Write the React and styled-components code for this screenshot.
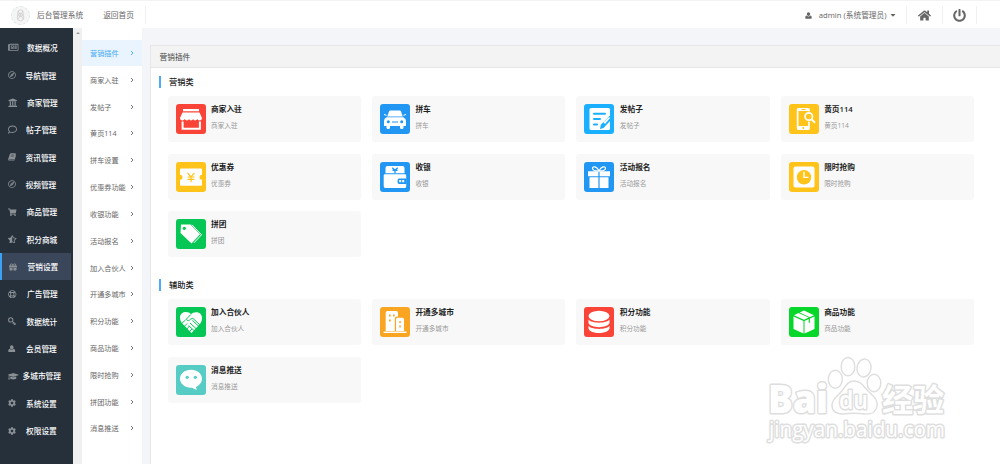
import React, { useState } from 'react';
import styled, { createGlobalStyle } from 'styled-components';
import {
  FaRegNewspaper,
  FaRegCompass,
  FaUniversity,
  FaRegComment,
  FaShoppingCart,
  FaStarHalfAlt,
  FaGift,
  FaRegLifeRing,
  FaGraduationCap,
  FaCog,
  FaHome,
  FaPowerOff,
  FaCaretDown,
} from 'react-icons/fa';

const GlobalStyle = createGlobalStyle`
  * {
    box-sizing: border-box;
  }
  body {
    margin: 0;
    overflow: hidden;
    background: #f4f5f8;
    font-family: 'Open Sans', 'Noto Sans CJK SC', sans-serif;
  }
`;

const Page = styled.div`
  display: flex;
  flex-direction: column;
  height: 464px;
  position: relative;
`;

const Header = styled.header`
  display: flex;
  justify-content: space-between;
  height: 28px;
  flex-shrink: 0;
  padding-top: 2px;
  background: #fff;
  border-top: 1px solid #f3f3f3;
  color: #666;
  font-size: 7.7px;
`;

const HeaderSide = styled.div`
  display: flex;
  align-items: center;
  height: 24px;
`;

const Logo = styled.div`
  width: 19px;
  height: 19px;
  margin: 1px 7.5px 0 10.5px;
  border-radius: 50%;
  border: 1px dashed #dbe9e5;
  background: #f5f5f5;
  display: flex;
  align-items: center;
  justify-content: center;
`;

const HeaderLink = styled.a`
  line-height: 24px;
  margin-right: ${(props) => props.$gap};
`;

const Divider = styled.i`
  width: 1px;
  height: 18px;
  background: #f0f0f0;
`;

const Admin = styled.div`
  display: flex;
  align-items: center;
  padding-right: 9.5px;
  line-height: 22px;
  height: 24px;

  svg:first-child {
    margin-right: 7px;
  }
  svg:last-child {
    margin-left: 2px;
  }
`;

const HeaderButton = styled.div`
  width: ${(props) => props.$width};
  display: flex;
  justify-content: center;
  font-size: 13px;
`;

const Body = styled.div`
  display: flex;
  flex: 1;
  min-height: 0;
`;

const Sidebar = styled.nav`
  width: 73px;
  padding-top: 6px;
  background: #25303b;
  border-right: 2px solid #25303b;
`;

const SideItem = styled.div`
  display: flex;
  align-items: center;
  height: 27.36px;
  padding-left: ${(props) => (props.$active ? '7px' : '8px')};
  border-left: ${(props) => (props.$active ? '2px solid #3ca0f5' : 'none')};
  background: ${(props) => (props.$active ? '#3a465a' : 'transparent')};
  color: #fff;
  font-size: 7.7px;
  font-weight: 500;
  white-space: nowrap;
  cursor: pointer;

  svg {
    flex-shrink: 0;
    color: #8b9094;
  }
  span {
    margin-left: ${(props) => props.$gap}px;
  }
`;

const ScrollTrack = styled.div`
  width: 9px;
  padding-top: 4px;
  background: #f0f0f0;
  display: flex;
  justify-content: center;
`;

const ScrollArrow = styled.i`
  width: 0;
  height: 0;
  border: 2px solid transparent;
  border-top: 0;
  border-bottom-color: #999;
`;

const SubMenu = styled.nav`
  width: 60px;
  padding-top: 11.6px;
  background: #fff;
`;

const SubItem = styled.div`
  display: flex;
  align-items: center;
  justify-content: space-between;
  height: 26.82px;
  padding: 0 8px;
  background: ${(props) => (props.$active ? '#eaf4fe' : 'transparent')};
  color: ${(props) => (props.$active ? '#3daaf8' : '#666')};
  font-size: 7.15px;
  white-space: nowrap;
`;

const Main = styled.main`
  flex: 1;
  padding: 17px 0 0 8px;
`;

const Panel = styled.section`
  height: 100%;
  background: #fff;
  border-left: 1px solid #e7e7e7;
`;

const PanelHead = styled.div`
  height: 23px;
  padding-left: 8.5px;
  line-height: 22px;
  background: #f3f3f3;
  border-top: 1px solid #e6e6e6;
  border-bottom: 1px solid #e6e6e6;
  color: #444;
  font-size: 7.7px;
`;

const Group = styled.div`
  padding: 8px 0 0 8px;
  height: 203px;
`;

const GroupTitle = styled.div`
  height: 12px;
  padding-left: 8px;
  border-left: 2px solid #4dabf7;
  line-height: 11px;
  color: #222;
  font-size: 8.2px;
  font-weight: 500;
`;

const Cards = styled.div`
  display: grid;
  grid-template-columns: repeat(4, 193.4px);
  grid-auto-rows: 46px;
  gap: 11.6px 11px;
  padding: 8px 0 0 8.5px;
`;

const Card = styled.div`
  display: flex;
  padding: 8px;
  border-radius: 3px;
  background: #f8f8f8;
`;

const CardIcon = styled.svg`
  width: 30px;
  height: 30px;
  margin-right: 5.5px;
  border-radius: 3px;
  background: ${(props) => props.$bg};
`;

const CardName = styled.div`
  height: 11px;
  line-height: 11px;
  color: #222;
  font-size: 7.7px;
  font-weight: 600;
`;

const CardDesc = styled.div`
  margin-top: 5px;
  line-height: 11px;
  color: #999;
  font-size: 6.65px;
`;

const Watermark = styled.svg`
  position: absolute;
  left: 750px;
  top: 350px;
  overflow: visible;
`;

const UserIcon = ({ size }) => (
  <svg width={size} height={size} viewBox="0 0 14 14" fill="currentColor">
    <path d="M7 .5c2 0 3.300 1.500 3.300 3.600S9 8 7 8 3.700 6.200 3.700 4.100 5 .5 7 .5zM3.600 6.800C4.500 8.200 5.600 9 7 9s2.500-.8 3.400-2.200c2.300.3 3.100 2.400 3.100 4.700 0 1.200-.8 2-2 2h-9c-1.200 0-2-.8-2-2 0-2.300.8-4.400 3.100-4.700z" />
  </svg>
);

const BookIcon = ({ size }) => (
  <svg width={size} height={size} viewBox="0 0 14 14" fill="currentColor">
    <path d="M5.200.5h7.300c1 0 1.400.7 1.200 1.500l-2.500 8.300c-.2.8-.8 1.200-1.500 1.200H2.200c-.7 0-.7 1 .3 1h8l2.800-8.500c.6.4.7.8.5 1.400l-2.300 7c-.2.700-.8 1.200-1.500 1.200H2.300C.8 13.600-.1 12 .4 10.700L3.200 2C3.500 1 4.200.5 5.200.5z" />
    <path d="M5.700 3.500h5M5 5.700h5" stroke="#25303b" strokeWidth=".9" />
  </svg>
);

const KeyIcon = ({ size }) => (
  <svg width={size} height={size} viewBox="0 0 14 14" fill="none" stroke="currentColor" strokeWidth="1.700">
    <circle cx="4.500" cy="4.800" r="3.500" />
    <path d="M7 7.300l6 5M9.300 9.500l-1.500 2M11.500 11.200L10 13" />
  </svg>
);

const sideMenu = [
  { label: '数据概况', icon: FaRegNewspaper, size: 10.5, gap: 8.5 },
  { label: '导航管理', icon: FaRegCompass, size: 8, gap: 9.5 },
  { label: '商家管理', icon: FaUniversity, size: 9.5, gap: 9.5 },
  { label: '帖子管理', icon: FaRegComment, size: 9, gap: 9 },
  { label: '资讯管理', icon: BookIcon, size: 8, gap: 9.5 },
  { label: '视频管理', icon: FaRegCompass, size: 8, gap: 9.5 },
  { label: '商品管理', icon: FaShoppingCart, size: 8.5, gap: 10 },
  { label: '积分商城', icon: FaStarHalfAlt, size: 8.5, gap: 10 },
  { label: '营销设置', icon: FaGift, size: 8, gap: 10.5 },
  { label: '广告管理', icon: FaRegLifeRing, size: 8.5, gap: 10.5 },
  { label: '数据统计', icon: KeyIcon, size: 8.5, gap: 10 },
  { label: '会员管理', icon: UserIcon, size: 7.5, gap: 10.5 },
  { label: '多城市管理', icon: FaGraduationCap, size: 10.5, gap: 4 },
  { label: '系统设置', icon: FaCog, size: 8, gap: 10 },
  { label: '权限设置', icon: FaCog, size: 8, gap: 10 },
];

const subMenu = [
  '营销插件',
  '商家入驻',
  '发帖子',
  '黄页114',
  '拼车设置',
  '优惠券功能',
  '收银功能',
  '活动报名',
  '加入合伙人',
  '开通多城市',
  '积分功能',
  '商品功能',
  '限时抢购',
  '拼团功能',
  '消息推送',
];

const icons = {
  shop: (
    <>
      <path d="M7 5h16v2.200H7zM6.500 8.500h17L26 14c0 1.500-1 2.400-2.200 2.400S21.600 15.800 21.300 15c-.6 1-1.300 1.400-2.200 1.400S17.400 15.900 17 15c-.5 1-1.200 1.400-2 1.400s-1.600-.5-2-1.400c-.5 1-1.200 1.400-2.100 1.400S9.100 15.900 8.700 15c-.4.900-1.200 1.400-2.300 1.400C5 16.400 4 15.500 4 14z" />
      <path d="M6.600 17.500v7.300h17.300v-7.300" fill="none" stroke="#fff" strokeWidth="2" />
    </>
  ),
  car: (
    <>
      <path d="M10.500 6.500h9c.8 0 1.200.3 1.500 1l1.800 5H7.200l1.800-5c.3-.7.7-1 1.500-1zM6.800 13.300h16.400c1.800.8 2.800 2 2.800 4V22h-2.500v1.500c0 2-3.500 2-3.500 0V22H10v1.500c0 2-3.500 2-3.500 0V22H4v-4.700c0-2 1-3.200 2.800-4z" />
      <path d="M4 10.500l2.500.8M26 10.500l-2.500.8" stroke="#fff" strokeWidth="1" />
      <circle cx="8.300" cy="17.800" r="1.500" fill="#2196f3" />
      <circle cx="21.700" cy="17.800" r="1.500" fill="#2196f3" />
      <path d="M12 17.400h6v1h-6z" fill="#2196f3" />
    </>
  ),
  post: (
    <>
      <path d="M7 4h17.500A1.500 1.500 0 0 1 26 5.500V24.500a1.500 1.500 0 0 1-1.500 1.500H7A1.500 1.500 0 0 1 5.500 24.500V5.500A1.500 1.500 0 0 1 7 4z" />
      <path d="M10 9.700h11M10 15h6M10 20.500h3" stroke="#1ab0ff" strokeWidth="2" strokeLinecap="round" />
      <path d="M16 25l.8-4.300L27 10.500v5.500L19.500 24z" fill="#1ab0ff" />
      <path d="M19.500 18.300L25 13l1 1-5 6z" />
    </>
  ),
  phone: (
    <>
      <path fillRule="evenodd" d="M9.300 4h10a1.500 1.500 0 0 1 1.500 1.500v19a1.500 1.500 0 0 1-1.500 1.500h-10a1.500 1.500 0 0 1-1.500-1.500v-19A1.500 1.500 0 0 1 9.300 4zM9.500 7v15h9.600V7z" />
      <path d="M12.500 5.500h4" stroke="#ffc31a" />
      <circle cx="14.300" cy="24" r="1" fill="#ffc31a" />
      <circle cx="19.800" cy="12.500" r="5.200" fill="#ffc31a" />
      <circle cx="19.800" cy="12.500" r="3.700" fill="none" stroke="#fff" strokeWidth="1.700" />
      <path d="M22.500 15.300l3.500 3.500" stroke="#fff" strokeWidth="2" />
    </>
  ),
  coupon: (
    <>
      <path d="M5 6.500h20a1 1 0 0 1 1 1v5.200a2.500 2.500 0 0 0 0 5v5.100a1 1 0 0 1-1 1H5a1 1 0 0 1-1-1v-5.100a2.500 2.500 0 0 0 0-5V7.500a1 1 0 0 1 1-1z" />
      <path d="M11.500 10.800l3.500 4 3.500-4M15 14.800v5.500M11.500 15h7M11.500 17.400h7" fill="none" stroke="#ffc31a" strokeWidth="1.200" />
    </>
  ),
  wallet: (
    <>
      <path d="M7.500 4h15A2 2 0 0 1 24.500 6v5.200H5.500V6a2 2 0 0 1 2-2z" />
      <path d="M12.300 5.800L15 8.300l2.700-2.500M15 8.300v3M12.500 8.300h5" fill="none" stroke="#2196f3" strokeWidth="1.400" />
      <path d="M5 12.300h20a1.200 1.200 0 0 1 1.200 1.200v11a1.500 1.500 0 0 1-1.500 1.500H5.500A1.800 1.800 0 0 1 3.700 24V13.500A1.200 1.200 0 0 1 5 12.300z" />
      <path d="M26.500 16.500H19c-2 0-2 5.500 0 5.500h7.500z" fill="#2196f3" />
      <path d="M19.200 18h2v2.300h-2zM22.200 18h2v2.300h-2z" />
    </>
  ),
  gift: (
    <>
      <path d="M4 9.200h10.400v5H4zM15.600 9.200H26v5H15.600zM5.500 15.200h8.900V26H5.500zM15.600 15.200h8.900V26h-8.900z" />
      <path d="M15 9C13 4.500 8.500 3.500 8.500 6.500c0 2 3 2.500 6.500 2.500s6.500-.5 6.500-2.500C21.500 3.500 17 4.500 15 9z" fill="none" stroke="#fff" strokeWidth="1.200" />
    </>
  ),
  clock: (
    <>
      <rect x="4.500" y="4.500" width="21" height="21" rx="2" />
      <circle cx="15" cy="15.300" r="7.200" fill="#ffc31a" />
      <path d="M15 9.800v5.600h4.500" fill="none" stroke="#fff" strokeWidth="1.400" />
    </>
  ),
  tag: (
    <>
      <path d="M5 5.500h9.500L24 15.300l-8.500 9.200L4.500 14z" />
      <path d="M16 5.800l9.500 10-7.500 8" fill="none" stroke="#fff" strokeWidth="1" />
      <circle cx="8.300" cy="9.300" r="1.600" fill="#06c755" />
    </>
  ),
  hands: (
    <>
      <path d="M15 7.300C12.500 3.800 4 4 4 10.800c0 3 1.500 5 3.500 7L15.500 26l7-7.500C25 16 26 14 26 11c0-7-8.500-7-11-3.700z" />
      <path d="M14.800 7.500l-4.500 4.800c1 1.800 3 1.500 4.500-.3l2-.7 7 6.500M5 17l4.500-4M7.300 20.500l3.800-4M10 23l3.500-4M12.800 25.500l3-3.500M14 16l6.500 6M16.500 13.500l6.500 6M12.500 18.500l6 5.500" fill="none" stroke="#06c755" strokeWidth="1" />
    </>
  ),
  city: (
    <>
      <path d="M7.500 4h8.700A1.800 1.800 0 0 1 18 5.800V24H5.700V5.800A1.800 1.800 0 0 1 7.500 4z" />
      <path d="M16.500 9.500h6.500a2 2 0 0 1 2 2V25H14.800V11.500a2 2 0 0 1 1.700-2z" fill="#f9a522" />
      <path d="M17.500 10.800h4.800A1.700 1.700 0 0 1 24 12.500V24h-8V12.500a1.700 1.700 0 0 1 1.500-1.700zM3.500 24.500h23v1.500h-23z" />
      <path d="M9 7.500h1.700v2H9zM13 7.500h1.700v2H13zM9 12.500h1.700v2H9zM19.300 14h1.500v2h-1.500zM19.300 18.500h1.500v2h-1.500z" fill="#f9a522" />
    </>
  ),
  coins: (
    <>
      <ellipse cx="15" cy="9" rx="10.500" ry="5.200" />
      <path d="M4.500 12.500c3 4.200 18 4.200 21 0V16c-1.500 5.500-19.500 5.500-21 0zM4.500 18.800c3 4.200 18 4.200 21 0v2.700c-1.500 6-19.500 6-21 0z" />
    </>
  ),
  box: (
    <>
      <path d="M4.500 9.500l10 4.500v12.500l-10-4.500zM15.500 14l10-4.500V22l-10 4.500zM5 8.300L9.500 6l10.200 4.600-4.700 2.200zM10.700 5.500L15 3.500l10 4.800-4.200 2z" />
      <path d="M20.300 10.500v5.300" stroke="#07d62b" strokeWidth="1.200" />
    </>
  ),
  message: (
    <>
      <path d="M15 4.800c6.200 0 11 3.900 11 9 0 3.600-2.500 6.600-6 8.100l.7 3-4.700-2.200c-6.500.5-12-3.600-12-8.900 0-5.100 4.800-9 11-9z" />
      <circle cx="11.200" cy="12.300" r="1.600" fill="#57ccc5" />
      <circle cx="19.300" cy="12.300" r="1.600" fill="#57ccc5" />
    </>
  ),
};

const groups = [
  {
    title: '营销类',
    items: [
      { name: '商家入驻', icon: 'shop', bg: '#fb4438' },
      { name: '拼车', icon: 'car', bg: '#2196f3' },
      { name: '发帖子', icon: 'post', bg: '#1ab0ff' },
      { name: '黄页114', icon: 'phone', bg: '#ffc31a' },
      { name: '优惠券', icon: 'coupon', bg: '#ffc31a' },
      { name: '收银', icon: 'wallet', bg: '#2196f3' },
      { name: '活动报名', icon: 'gift', bg: '#2196f3' },
      { name: '限时抢购', icon: 'clock', bg: '#ffc31a' },
      { name: '拼团', icon: 'tag', bg: '#06c755' },
    ],
  },
  {
    title: '辅助类',
    items: [
      { name: '加入合伙人', icon: 'hands', bg: '#06c755' },
      { name: '开通多城市', icon: 'city', bg: '#f9a522' },
      { name: '积分功能', icon: 'coins', bg: '#fb4438' },
      { name: '商品功能', icon: 'box', bg: '#07d62b' },
      { name: '消息推送', icon: 'message', bg: '#57ccc5' },
    ],
  },
];

const BaiduMark = () => (
  <Watermark width="220" height="110" fill="#fff" stroke="#dedede" strokeWidth="1.400">
    <ellipse cx="85.300" cy="29.300" rx="7" ry="9" />
    <ellipse cx="98" cy="16.700" rx="6.800" ry="9.200" />
    <ellipse cx="114" cy="18" rx="7" ry="9" transform="rotate(10 114 18)" />
    <ellipse cx="124" cy="33" rx="6.800" ry="8.700" />
    <path d="M104 31c8 0 10 7 16 12 5 4 8 8 7 13-1 6-6 8.500-12 8-8-1-14-1-22 0-7 0-11-3-11-9 0-5 4-8 8-12 5-5 7-12 14-12z" />
    <g fontWeight="700" paintOrder="stroke" strokeWidth="3" strokeLinejoin="round">
      <text x="18" y="63" fontSize="39" fontFamily="Open Sans" fontWeight="800" textLength="60" lengthAdjust="spacingAndGlyphs">Bai</text>
      <text x="132" y="61" fontSize="31" fontFamily="Noto Sans CJK SC" textLength="62">经验</text>
      <text x="19" y="87" fontSize="21" fontFamily="Open Sans" fontWeight="400" textLength="176" lengthAdjust="spacingAndGlyphs">jingyan.baidu.com</text>
      <text x="89" y="58.500" fontSize="25" fontFamily="Open Sans" fontWeight="600" textLength="29" lengthAdjust="spacingAndGlyphs">du</text>
    </g>
  </Watermark>
);

const App = () => {
  const [active, setActive] = useState('营销设置');

  return (
    <Page>
      <GlobalStyle />
      <Header>
        <HeaderSide>
          <Logo>
            <svg width="9" height="13" viewBox="0 0 9 13" fill="none" stroke="#ccc" strokeWidth=".8">
              <ellipse cx="4.500" cy="4.200" rx="2.800" ry="3.400" />
              <ellipse cx="4.500" cy="8.200" rx="3.300" ry="3.800" />
              <path d="M2 2l5 8M7 2l-5 8" />
            </svg>
          </Logo>
          <HeaderLink $gap="20px">后台管理系统</HeaderLink>
          <HeaderLink $gap="11.5px">返回首页</HeaderLink>
          <Divider />
        </HeaderSide>
        <HeaderSide>
          <Admin>
            <UserIcon size={7} />
            admin (系统管理员)
            <FaCaretDown size={8} />
          </Admin>
          <Divider />
          <HeaderButton $width="35px">
            <FaHome />
          </HeaderButton>
          <Divider />
          <HeaderButton $width="33px">
            <FaPowerOff />
          </HeaderButton>
          <Divider style={{ marginRight: 23 }} />
        </HeaderSide>
      </Header>
      <Body>
        <Sidebar>
          {sideMenu.map(({ label, icon: Icon, size, gap }) => (
            <SideItem
              key={label}
              $active={label === active}
              $gap={gap}
              onClick={() => setActive(label)}
            >
              <Icon size={size} />
              <span>{label}</span>
            </SideItem>
          ))}
        </Sidebar>
        <ScrollTrack>
          <ScrollArrow />
        </ScrollTrack>
        <SubMenu>
          {subMenu.map((label, index) => (
            <SubItem key={label} $active={index === 0}>
              {label}
              <svg width="4" height="6" fill="none" stroke="currentColor" strokeWidth=".9">
                <path d="M1 1l2 2-2 2" />
              </svg>
            </SubItem>
          ))}
        </SubMenu>
        <Main>
          <Panel>
            <PanelHead>营销插件</PanelHead>
            {groups.map((group) => (
              <Group key={group.title}>
                <GroupTitle>{group.title}</GroupTitle>
                <Cards>
                  {group.items.map((item) => (
                    <Card key={item.name}>
                      <CardIcon $bg={item.bg} viewBox="0 0 30 30" fill="#fff">
                        {icons[item.icon]}
                      </CardIcon>
                      <div>
                        <CardName>{item.name}</CardName>
                        <CardDesc>{item.name}</CardDesc>
                      </div>
                    </Card>
                  ))}
                </Cards>
              </Group>
            ))}
          </Panel>
        </Main>
      </Body>
      <BaiduMark />
    </Page>
  );
};

export default App;
